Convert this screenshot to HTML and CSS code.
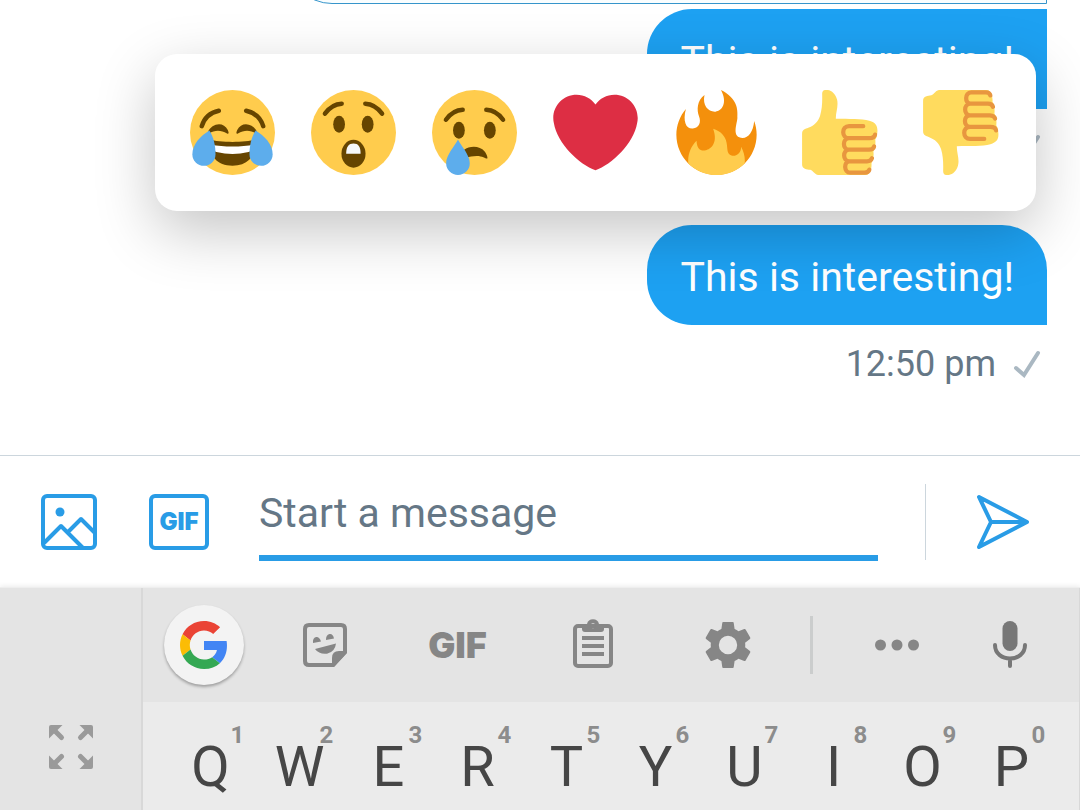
FILE: index.html
```html
<!DOCTYPE html>
<html lang="en">
<head>
<meta charset="utf-8">
<meta name="viewport" content="width=device-width, initial-scale=1">
<title>Messages</title>
<link rel="stylesheet" href="styles.css">
</head>
<body>
<main class="chat">
  <div class="messages">
    <div class="bubble bubble-outline"></div>
    <div class="bubble bubble-first">This is interesting!</div>
    <div class="meta meta-first">
      <svg class="check" viewBox="0 0 28 28" aria-hidden="true"><path d="M3 18l8 7L25 3"/></svg>
    </div>
    <div class="bubble bubble-last">This is interesting!</div>
    <div class="meta"><span>12:50 pm</span>
      <svg class="check" viewBox="0 0 28 28" aria-hidden="true"><path d="M3 18l8 7L25 3"/></svg>
    </div>
  </div>

  <div class="reactions" role="group" aria-label="Reactions">
    <button class="reaction" aria-label="Tears of joy">
      <svg viewBox="0 0 36 36">
        <circle cx="18" cy="18" r="18" fill="#ffcc4d"/>
        <g class="brow"><path d="M5 15.3C6 12 8.500 9.600 12.200 8.800M31 15.300C30 12 27.500 9.600 23.800 8.800"/></g>
        <g fill="#664500">
          <path d="M7.600 17.800C9.200 14 14.200 13.200 16 16.900C16.600 18.200 16.400 18.700 15.700 18.400C13 16.900 10.500 16.900 8 18.500z"/>
          <path d="M28.400 17.800C26.800 14 21.800 13.200 20 16.900C19.400 18.200 19.600 18.700 20.300 18.400C23 16.900 25.500 16.900 28 18.500z"/>
          <path d="M8 21C13 22.300 23 22.300 28 21C28 28 24.500 32.100 18 32.100S8 28 8 21z"/>
        </g>
        <path d="M9 23.200C14 24.200 22 24.200 27 23.200C26.500 25 26 26 24.800 26.300C20 27.400 16 27.400 11.200 26.300C10 26 9.500 25 9 23.200z" fill="#fff"/>
        <g fill="#5dadec">
          <path d="M8.200 17.200C10 20 10.800 23.500 10.800 27.200A4.900 4.900 0 0 1 1 27.200C1 23 4.500 19.500 8.200 17.200z"/>
          <path d="M27.800 17.200C26 20 25.200 23.500 25.200 27.200A4.900 4.900 0 0 0 35 27.200C35 23 31.500 19.500 27.800 17.200z"/>
        </g>
      </svg>
    </button>
    <button class="reaction" aria-label="Astonished">
      <svg viewBox="0 0 36 36">
        <circle cx="18" cy="18" r="18" fill="#ffcc4d"/>
        <g class="brow"><path d="M5.900 10C7.800 7.400 10.200 5.900 13 5.800M30.100 10C28.200 7.400 25.800 5.900 23 5.800"/></g>
        <g fill="#664500">
          <ellipse cx="11.900" cy="14.500" rx="2.500" ry="3.600"/>
          <ellipse cx="24" cy="14.500" rx="2.500" ry="3.600"/>
          <ellipse cx="18" cy="27" rx="5.100" ry="5.900"/>
        </g>
        <path d="M14.900 27C14.900 24 16 22.700 18 22.700S21 24 21 27z" fill="#f5f8fa"/>
      </svg>
    </button>
    <button class="reaction" aria-label="Sad">
      <svg viewBox="0 0 36 36">
        <circle cx="18" cy="18" r="18" fill="#ffcc4d"/>
        <g class="brow"><path d="M5.900 12.600C7.800 10 10.200 8.500 13 8.400M30.100 12.600C28.200 10 25.800 8.500 23 8.400"/></g>
        <g fill="#664500">
          <ellipse cx="11.400" cy="17" rx="2.500" ry="3.600"/>
          <ellipse cx="24.500" cy="17" rx="2.500" ry="3.600"/>
          <path d="M13.500 25.400C16 23.500 20.200 23.500 22.300 26C23.200 27.200 23.700 28.700 23.400 29C23 29.300 21.500 27.900 19 27.900C17 27.900 16 28.300 14.500 28.600z"/>
        </g>
        <path d="M11 21C9.500 24 6 27.500 6 31A5 5 0 0 0 16 31C16 27.500 12.500 24 11 21z" fill="#5dadec"/>
      </svg>
    </button>
    <button class="reaction" aria-label="Love">
      <svg viewBox="0 0 36 36"><path fill="#dd2e44" d="M35.885 11.833c0-5.45-4.418-9.868-9.867-9.868-3.308 0-6.227 1.633-8.018 4.129-1.791-2.496-4.71-4.129-8.017-4.129-5.45 0-9.868 4.417-9.868 9.868 0 .772.098 1.52.266 2.241C1.751 22.587 11.216 31.568 18 34.034c6.783-2.466 16.249-11.447 17.617-19.959.17-.721.268-1.469.268-2.242z"/></svg>
    </button>
    <button class="reaction" aria-label="Fire">
      <svg viewBox="0 0 36 36">
        <path fill="#f4900c" d="M35 19c0-2.062-.367-4.039-1.040-5.868-.46 5.389-3.333 8.157-6.335 6.868-2.812-1.208-.917-5.917-.777-8.164.236-3.809-.012-8.169-6.931-11.794 2.875 5.500.333 8.917-2.333 9.125-2.958.231-5.667-2.542-4.667-7.042-3.238 2.386-3.332 6.402-2.333 9 1.042 2.708-.042 4.958-2.583 5.208-2.840.280-4.418-3.041-2.963-8.333C2.520 10.965 1 14.805 1 19c0 9.389 7.611 17 17 17s17-7.611 17-17z"/>
        <path fill="#ffcc4d" d="M28.394 23.999c.148 3.084-2.561 4.293-4.019 3.709-2.106-.843-1.541-2.291-2.083-5.291s-2.625-5.083-5.708-6c2.250 6.333-1.247 8.667-3.080 9.084-1.872.426-3.753-.001-3.968-4.007C7.352 23.668 6 26.676 6 30c0 .368.023.730.055 1.090C9.125 34.124 13.342 36 18 36s8.875-1.876 11.945-4.910c.032-.360.055-.722.055-1.090 0-2.187-.584-4.236-1.606-6.001z"/>
      </svg>
    </button>
    <button class="reaction" aria-label="Thumbs up">
      <svg viewBox="0 0 36 36">
        <g id="thumb">
          <path fill="#ffdb5e" d="M12.800 0C15 -.3 17 1.200 17.800 4C18.500 6.800 17.200 9.500 17.300 12.200C23 12.300 28 12.100 31.500 13C34.300 13.800 35 15.300 34.900 17.500C34.800 19 34.700 20 34 21C34.200 23 34 24.600 33.200 26C33.500 28 33 29.800 32.400 31C32.600 33.800 31.500 36 30 36H9.800C8.500 36 7.800 34.300 6.500 33.800C5 33.500 3 33.500 3 31.500V18.500C3 16.700 4.400 16.500 5.600 16C8 15.100 9.800 13.500 10.600 11C11.500 8 11.600 5 11.500 1.600C11.500 .6 12 .1 12.800 0z"/>
          <path class="fingers" d="M28.900 15.300H22.900C19.600 15.300 19.600 20.400 22.900 20.400H31.500Q33.600 20.400 33.900 18.900M22.900 20.400C20 20.400 20 25.300 22.900 25.300H31.300Q33.200 25.200 33.500 23.900M22.900 25.300C20.100 25.300 20.100 30.200 23 30.200H30.500Q32.200 30.200 32.600 28.900M23 30.200C20.600 30.200 20.600 35 23.400 35H29.500Q31.200 35 31.500 33.700"/>
        </g>
      </svg>
    </button>
    <button class="reaction" aria-label="Thumbs down">
      <svg viewBox="0 0 36 36"><use href="#thumb" transform="matrix(1 0 0 -1 0 36)"/></svg>
    </button>
  </div>
</main>

<form class="compose">
  <button type="button" class="photo" aria-label="Add photo">
    <svg viewBox="0 0 56 56"><rect x="2" y="2" width="52" height="52" rx="4"/><path d="M3 49L20 32L42 54M27 38L40 25L54 39"/><circle class="sun" cx="19" cy="18" r="4.500"/></svg>
  </button>
  <button type="button" class="gif">GIF</button>
  <input class="entry" type="text" placeholder="Start a message" aria-label="Start a message">
  <span class="rule"></span>
  <button type="button" class="send" aria-label="Send">
    <svg viewBox="0 0 54 56"><path d="M3 3L51 28L3 53L15 28zM15 28H50"/></svg>
  </button>
</form>

<section class="keyboard" aria-label="Keyboard">
  <div class="side">
    <button class="expand" aria-label="Float keyboard">
      <svg viewBox="0 0 44 44">
        <g id="arrow"><path d="M2 0H13.500L0 13.500V2Q0 0 2 0z"/><path class="shaft" d="M5 5L12.500 12.500"/></g>
        <use href="#arrow" transform="matrix(-1 0 0 1 44 0)"/>
        <use href="#arrow" transform="matrix(1 0 0 -1 0 44)"/>
        <use href="#arrow" transform="matrix(-1 0 0 -1 44 44)"/>
      </svg>
    </button>
  </div>
  <div class="board">
    <div class="tools">
      <button class="google" aria-label="Search">
        <svg viewBox="0 0 48 48" width="48" height="48">
          <path fill="#ea4335" d="M24 9.500c3.540 0 6.710 1.220 9.210 3.600l6.850-6.850C35.900 2.380 30.470 0 24 0 14.620 0 6.510 5.380 2.560 13.220l7.980 6.190C12.430 13.720 17.740 9.500 24 9.500z"/>
          <path fill="#4285f4" d="M46.980 24.550c0-1.570-.15-3.090-.38-4.550H24v9.020h12.940c-.58 2.960-2.260 5.480-4.780 7.180l7.730 6c4.510-4.180 7.090-10.360 7.090-17.650z"/>
          <path fill="#fbbc05" d="M10.530 28.590c-.48-1.450-.76-2.990-.76-4.590s.27-3.140.76-4.590l-7.980-6.190C.92 16.460 0 20.120 0 24c0 3.880.92 7.540 2.560 10.780l7.970-6.190z"/>
          <path fill="#34a853" d="M24 48c6.480 0 11.930-2.130 15.890-5.810l-7.730-6c-2.150 1.450-4.920 2.300-8.160 2.300-6.260 0-11.570-4.220-13.470-9.910l-7.980 6.190C6.510 42.620 14.620 48 24 48z"/>
        </svg>
      </button>
      <button aria-label="Stickers">
        <svg viewBox="0 0 44 44" width="44" height="44" fill="#868686">
          <path d="M6 2H38Q42 2 42 6V29L30 42H6Q2 42 2 38V6Q2 2 6 2z" fill="none" stroke="#868686" stroke-width="4"/>
          <path d="M44 28V30L31 44H29V35Q29 28 36 28z"/>
          <path d="M10 20Q9.500 15 13 14Q16.500 13.500 18 18.500zM23 17Q22.800 12 26.500 11Q30 10.500 31 15.500zM12 26L33 20.500Q32 29 24 30.700Q16 31.500 12 26z"/>
        </svg>
      </button>
      <button class="tool-gif">GIF</button>
      <button aria-label="Clipboard">
        <svg viewBox="0 0 40 53" width="40" height="53" fill="#868686">
          <rect x="2" y="7" width="36" height="40" rx="3" fill="none" stroke="#868686" stroke-width="4"/>
          <path fill-rule="evenodd" d="M9 5H14A6.200 6.200 0 0 1 26 5H31V10Q31 13 28 13H12Q9 13 9 10zM20 4.200a2.500 2.500 0 1 0 0 5a2.500 2.500 0 1 0 0-5z"/>
          <path d="M9 17H31V21H9zM9 25H31V29H9zM9 33H31V37H9z"/>
        </svg>
      </button>
      <button aria-label="Settings">
        <svg viewBox="2 2 20 20" width="46" height="46" fill="#868686"><path fill-rule="evenodd" d="M19.430 12.980c.04-.32.07-.64.07-.98s-.03-.66-.07-.98l2.110-1.650c.19-.15.24-.42.12-.64l-2-3.460c-.12-.22-.39-.3-.61-.22l-2.490 1c-.52-.4-1.080-.73-1.690-.98l-.38-2.650C14.460 2.180 14.250 2 14 2h-4c-.25 0-.46.18-.49.42l-.38 2.650c-.61.25-1.170.59-1.690.98l-2.490-1c-.23-.09-.49 0-.61.22l-2 3.460c-.13.22-.07.49.12.64l2.110 1.650c-.04.32-.07.65-.07.98s.03.66.07.98l-2.110 1.650c-.19.15-.24.42-.12.64l2 3.460c.12.22.39.3.61.22l2.490-1c.52.4 1.080.73 1.690.98l.38 2.650c.03.24.24.42.49.42h4c.25 0 .46-.18.49-.42l.38-2.650c.61-.25 1.170-.59 1.690-.98l2.490 1c.23.09.49 0 .61-.22l2-3.460c.12-.22.07-.49-.12-.64l-2.110-1.650zM12 8a4 4 0 1 0 0 8a4 4 0 1 0 0-8z"/></svg>
      </button>
      <span class="tool-rule"></span>
      <button aria-label="More">
        <svg viewBox="0 0 44 12" width="44" height="12" fill="#868686"><circle cx="5.500" cy="6" r="5.500"/><circle cx="22" cy="6" r="5.500"/><circle cx="38.500" cy="6" r="5.500"/></svg>
      </button>
      <button aria-label="Voice input">
        <svg viewBox="0 0 36 48" width="36" height="48"><rect x="10.500" y="0" width="15" height="30" rx="7.500" fill="#777"/><path d="M3 24C3 42 33 42 33 24M18 38V45" fill="none" stroke="#777" stroke-width="4" stroke-linecap="round"/></svg>
      </button>
    </div>
    <div class="keys">
      <button class="key"><small>1</small><span>Q</span></button>
      <button class="key"><small>2</small><span>W</span></button>
      <button class="key"><small>3</small><span>E</span></button>
      <button class="key"><small>4</small><span>R</span></button>
      <button class="key"><small>5</small><span>T</span></button>
      <button class="key"><small>6</small><span>Y</span></button>
      <button class="key"><small>7</small><span>U</span></button>
      <button class="key"><small>8</small><span>I</span></button>
      <button class="key"><small>9</small><span>O</span></button>
      <button class="key"><small>0</small><span>P</span></button>
    </div>
  </div>
</section>
</body>
</html>
```
FILE: styles.css
```css
* { box-sizing: border-box; }

body {
  margin: 0;
  height: 100vh;
  display: flex;
  flex-direction: column;
  overflow: hidden;
  background: #fff;
  font-family: Roboto, "Liberation Sans", sans-serif;
}

button {
  padding: 0;
  border: 0;
  background: none;
  font-family: inherit;
  color: inherit;
}

svg { display: block; }

/* Conversation */
.chat {
  position: relative;
  flex: 1;
  min-height: 0;
}

.messages {
  height: 100%;
  overflow: hidden;
  display: flex;
  flex-direction: column;
  justify-content: flex-end;
  align-items: flex-end;
  padding: 0 33px 69px;
}

.bubble {
  flex: none;
  padding: 28px 33px 24px 34px;
  background: #1da1f2;
  color: #fff;
  font-size: 41px;
  line-height: 48px;
}

.bubble-outline {
  width: 75%;
  height: 100px;
  margin-bottom: 5px;
  border: 1px solid #3695cb;
  border-radius: 45px 0 0 45px;
  background: #fafeff;
}

.bubble-first { border-radius: 45px 0 0 45px; }

.bubble-last { border-radius: 45px 45px 0 45px; }

.meta {
  flex: none;
  display: flex;
  align-items: center;
  gap: 17px;
  height: 44px;
  margin-top: 17px;
  padding-right: 6px;
  color: #657786;
  font-size: 36px;
  line-height: 44px;
}

.meta-first { margin-bottom: 55px; }

.check {
  width: 28px;
  height: 28px;
  fill: none;
  stroke: #aab8c2;
  stroke-width: 4;
  stroke-linecap: round;
}

/* Reaction picker */
.reactions {
  position: absolute;
  top: 54px;
  left: 155px;
  right: 44px;
  display: flex;
  justify-content: space-between;
  padding: 36px 35px;
  border-radius: 22px;
  background: #fff;
  box-shadow: 0 20px 60px rgba(0, 0, 0, 0.23);
}

.reaction svg {
  width: 85px;
  height: 85px;
}

.brow {
  fill: none;
  stroke: #664500;
  stroke-width: 1.9;
  stroke-linecap: round;
}

.fingers {
  fill: none;
  stroke: #e8963f;
  stroke-width: 1.8;
  stroke-linecap: round;
}

/* Message entry */
.compose {
  flex: none;
  display: flex;
  align-items: center;
  height: 132px;
  padding: 0 50px 0 41px;
  border-top: 1px solid #ccd6dd;
  color: #299ce6;
}

.photo svg {
  width: 56px;
  height: 56px;
}

.photo svg,
.send svg {
  fill: none;
  stroke: currentColor;
  stroke-width: 4;
  stroke-linejoin: round;
}

.photo .sun {
  fill: currentColor;
  stroke: none;
}

.gif {
  width: 60px;
  height: 56px;
  margin: 0 50px 0 52px;
  border: 4px solid;
  border-radius: 6px;
  font-family: Inter, sans-serif;
  font-weight: 900;
  font-size: 24px;
}

.entry {
  flex: 1;
  min-width: 0;
  height: 78px;
  padding: 0 0 12px;
  border: 0;
  border-bottom: 6px solid #299ce6;
  border-radius: 0;
  outline: 0;
  background: none;
  color: #14171a;
  font-family: inherit;
  font-size: 41px;
}

.entry::placeholder {
  color: #657786;
  opacity: 1;
}

.rule {
  width: 1px;
  height: 76px;
  margin: 0 50px 0 47px;
  background: #ccd6dd;
}

.send svg {
  width: 54px;
  height: 56px;
}

/* Keyboard */
.keyboard {
  flex: none;
  display: flex;
  border-top: 1px solid #eee;
  background: #e4e4e4;
  box-shadow: 0 -1px 5px rgba(0, 0, 0, 0.08);
}

.side {
  width: 143px;
  display: flex;
  justify-content: center;
  align-items: flex-end;
  padding-bottom: 41px;
  border-right: 2px solid #d8d8d8;
}

.expand svg {
  width: 44px;
  height: 44px;
  fill: #9a9a9a;
}

.shaft {
  stroke: #9a9a9a;
  stroke-width: 5;
  stroke-linecap: round;
}

.board {
  flex: 1;
  border-right: 1px solid #d8d8d8;
}

.tools {
  display: grid;
  grid-template-columns: 121fr 121fr 145fr 125fr 145fr 22fr 150fr 76fr;
  align-items: center;
  justify-items: center;
  height: 114px;
  padding-right: 31px;
}

.google {
  display: grid;
  place-items: center;
  width: 80px;
  height: 80px;
  border-radius: 50%;
  background: #f3f3f3;
  box-shadow: 0 2px 3px rgba(0, 0, 0, 0.3);
}

.tool-gif {
  color: #868686;
  font-family: Inter, sans-serif;
  font-weight: 900;
  font-size: 36px;
}

.tool-rule {
  width: 3px;
  height: 58px;
  background: #cbcdcd;
}

.keys {
  display: grid;
  grid-template-columns: repeat(10, 1fr);
  padding: 21px 23px 23px;
  background: #ebebeb;
}

.key {
  display: flex;
  flex-direction: column;
  align-items: center;
  color: #464646;
  font-size: 56px;
  line-height: 40px;
}

.key small {
  padding-left: 54px;
  color: #8c8c8c;
  font-size: 24px;
  font-weight: 700;
  line-height: 24px;
}
```
